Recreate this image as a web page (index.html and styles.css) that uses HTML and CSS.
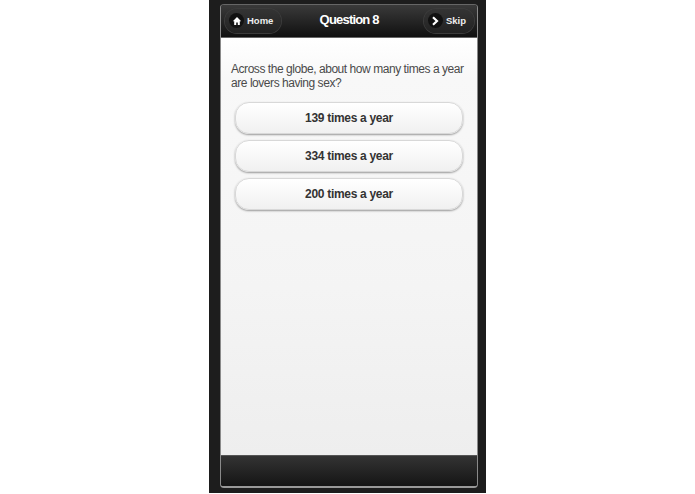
FILE: index.html
```html
<!DOCTYPE html>
<html lang="en">
<head>
	<meta charset="UTF-8">
	<title>Question 8</title>
	<link rel="stylesheet" href="styles.css">
</head>
<body>

<div class="phone">
	<div class="screen">
		<header class="bar">
			<a class="nav-btn">
				<span class="nav-icon">
					<svg width="10" height="10" viewBox="0 0 10 10"><path d="M5 1 L9.2 5.2 H7.8 V9 H5.8 V6.4 H4.2 V9 H2.2 V5.2 H0.8 Z" fill="#fff"/></svg>
				</span>
				Home
			</a>
			<h1>Question 8</h1>
			<a class="nav-btn">
				<span class="nav-icon">
					<svg width="10" height="10" viewBox="0 0 10 10"><path d="M3 1.2 L7 5 L3 8.8" fill="none" stroke="#fff" stroke-width="2.2"/></svg>
				</span>
				Skip
			</a>
		</header>
		<main class="content">
			<p class="question">Across the globe, about how many times a year are lovers having sex?</p>
			<div class="answers">
				<button class="answer" type="button">139 times a year</button>
				<button class="answer" type="button">334 times a year</button>
				<button class="answer" type="button">200 times a year</button>
			</div>
		</main>
		<footer class="bar footer"></footer>
	</div>
</div>

</body>
</html>
```
FILE: styles.css
```css
html, body {
	height: 100%;
}
body {
	margin: 0;
	background: #fff;
	font-family: "Liberation Sans", Arial, sans-serif;
	overflow: hidden;
}
.phone {
	box-sizing: border-box;
	width: 277px;
	height: 493px;
	margin: 0 auto;
	padding: 4px 8px 5px 11px;
	background: #1d1d1d;
}
.screen {
	box-sizing: border-box;
	display: flex;
	flex-direction: column;
	height: 100%;
	border: 1px solid #8a8a8a;
	border-top-color: #666;
	border-bottom: 2px solid #999;
	border-radius: 4px;
	overflow: hidden;
}
.bar {
	display: flex;
	align-items: center;
	justify-content: space-between;
	flex: none;
	height: 32px;
	padding: 0 3px 0 4px;
	background: linear-gradient(#3a3a3a, #101010);
	border-bottom: 1px solid #666;
}
.bar h1 {
	margin: 0 7px 3px 0;
	color: #fff;
	font-size: 13px;
	letter-spacing: -0.8px;
}
.nav-btn {
	display: flex;
	align-items: center;
	gap: 3px;
	height: 24px;
	margin-bottom: 1px;
	padding: 0 8px 0 4px;
	border-radius: 12px;
	background: linear-gradient(#343434, #222);
	box-shadow: 0 0 0 1px #3c3c3c;
	color: #eee;
	font-size: 9.5px;
	font-weight: bold;
}
.nav-icon {
	display: flex;
	align-items: center;
	justify-content: center;
	width: 15px;
	height: 15px;
	border-radius: 50%;
	background: #111;
}
.content {
	flex: 1;
	padding: 24px 14px 0 10px;
	background: linear-gradient(#fff, #f8f8f8 40px, #f4f4f4 60%, #eee);
}
.question {
	margin: 0 -1px 12px 0;
	color: #4a4a4a;
	font-size: 12px;
	line-height: 14px;
	letter-spacing: -0.45px;
}
.answers {
	display: flex;
	flex-direction: column;
	gap: 6px;
	padding-left: 4px;
}
.answer {
	height: 32px;
	border: 1px solid #d8d8d8;
	border-radius: 14px;
	background: linear-gradient(#fff, #f0f0f0);
	box-shadow: 0 1px 2px #999;
	color: #333;
	font-family: inherit;
	font-size: 12px;
	font-weight: bold;
	letter-spacing: -0.3px;
}
.footer {
	height: 30px;
	border-top: 1px solid #555;
	border-bottom: 0;
	background: linear-gradient(#333, #151515);
}
```
